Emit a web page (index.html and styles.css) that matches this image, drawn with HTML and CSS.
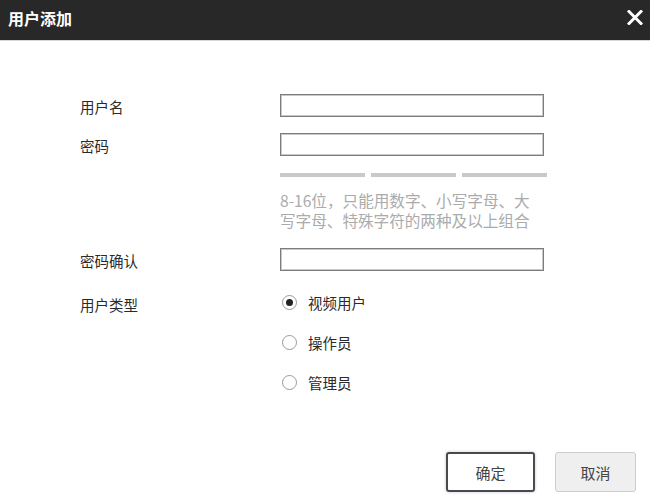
FILE: index.html
```html
<!DOCTYPE html>
<html lang="zh-CN">

<head>
    <meta charset="UTF-8">
    <meta name="viewport" content="width=device-width, initial-scale=1.0">
    <title>用户添加</title>
    <link rel="stylesheet" href="styles.css">
</head>

<body>
    <div class="dialog">
        <div class="baslik">
            <span class="baslik-yazi">用户添加</span>
            <svg class="kapat" width="16" height="15" viewBox="0 0 16 15">
                <path d="M2 1.5 L14 13.5 M14 1.5 L2 13.5" stroke="#fff" stroke-width="3" stroke-linecap="square" />
            </svg>
        </div>

        <div class="form">
            <div class="satir satir-ilk">
                <label class="etiket">用户名</label>
                <input class="kutu" type="text">
            </div>
            <div class="satir">
                <label class="etiket">密码</label>
                <input class="kutu" type="password">
            </div>
            <div class="satir satir-bar">
                <span class="etiket"></span>
                <div class="barlar">
                    <span class="bar"></span>
                    <span class="bar"></span>
                    <span class="bar"></span>
                </div>
            </div>
            <div class="satir satir-ipucu">
                <span class="etiket"></span>
                <p class="ipucu">8-16位，只能用数字、小写字母、大写字母、特殊字符的两种及以上组合</p>
            </div>
            <div class="satir satir-onay">
                <label class="etiket">密码确认</label>
                <input class="kutu" type="password">
            </div>
            <div class="satir satir-tip">
                <label class="etiket">用户类型</label>
                <div class="secenekler">
                    <label class="secenek"><span class="radyo secili"></span>视频用户</label>
                    <label class="secenek"><span class="radyo"></span>操作员</label>
                    <label class="secenek"><span class="radyo"></span>管理员</label>
                </div>
            </div>
        </div>

        <div class="butonlar">
            <button class="tamam">确定</button>
            <button class="iptal">取消</button>
        </div>
    </div>
</body>

</html>
```

FILE: styles.css
```css
body {
    margin: 0;
    background: #fff;
    font-family: "Noto Sans CJK SC", "Liberation Sans", sans-serif;
    color: #333;
}

.dialog {
    width: 650px;
    height: 498px;
    overflow: hidden;
}

.baslik {
    height: 40px;
    background-color: #282828;
    border-bottom: 1px solid #d8d8d8;
    display: flex;
    align-items: center;
    justify-content: space-between;
    padding: 0 7px 0 8px;
}

.baslik-yazi {
    color: #fff;
    font-size: 16px;
    font-weight: bold;
    line-height: 20px;
    margin-top: -4px;
}

.kapat {
    margin-top: -6px;
}

.form {
    padding-left: 80px;
}

.satir {
    display: flex;
    align-items: center;
}

.etiket {
    width: 200px;
    flex: none;
    font-size: 14.5px;
    line-height: 20px;
    padding-top: 3px;
    color: #2a2a2a;
}

.satir-ilk {
    margin-top: 53px;
}

.satir + .satir {
    margin-top: 16px;
}

.kutu {
    box-sizing: border-box;
    width: 264px;
    height: 23px;
    margin: 0;
    border: 1px solid #7c7c7c;
    box-shadow: inset 0 0 0 1px #c8c8c8;
    outline: none;
}

.satir.satir-bar {
    margin-top: 17px;
}

.barlar {
    display: flex;
    gap: 6px;
    width: 267px;
}

.bar {
    flex: 1;
    height: 4px;
    background-color: #c9c9c9;
}

.satir.satir-ipucu {
    margin-top: 13px;
}

.ipucu {
    margin: 0;
    width: 264px;
    font-size: 15.6px;
    line-height: 20px;
    color: #ababab;
}

.satir.satir-onay {
    margin-top: 18px;
}

.satir.satir-tip {
    margin-top: 21px;
    align-items: flex-start;
}

.secenekler {
    display: flex;
    flex-direction: column;
    gap: 20px;
}

.secenek {
    display: flex;
    align-items: center;
    height: 20px;
    font-size: 14.5px;
    color: #2a2a2a;
}

.radyo {
    box-sizing: border-box;
    width: 15px;
    height: 15px;
    border: 1px solid #9a9a9a;
    border-radius: 50%;
    margin-left: 2px;
    margin-right: 11px;
    display: flex;
    align-items: center;
    justify-content: center;
}

.radyo.secili::after {
    content: "";
    width: 7px;
    height: 7px;
    border-radius: 50%;
    background-color: #222;
}

.butonlar {
    display: flex;
    justify-content: flex-end;
    gap: 20px;
    padding-right: 14px;
    margin-top: 60px;
}

.tamam,
.iptal {
    font-family: "Noto Sans CJK SC", sans-serif;
    font-size: 15px;
    height: 40px;
    border-radius: 3px;
}

.tamam {
    width: 89px;
    background: #fff;
    color: #444;
    border: 2px solid #4a4a4a;
    box-shadow: 0 0 3px rgba(120, 140, 200, 0.5);
}

.iptal {
    width: 81px;
    background: #efefef;
    color: #444;
    border: 1px solid #cdcdcd;
}
```
